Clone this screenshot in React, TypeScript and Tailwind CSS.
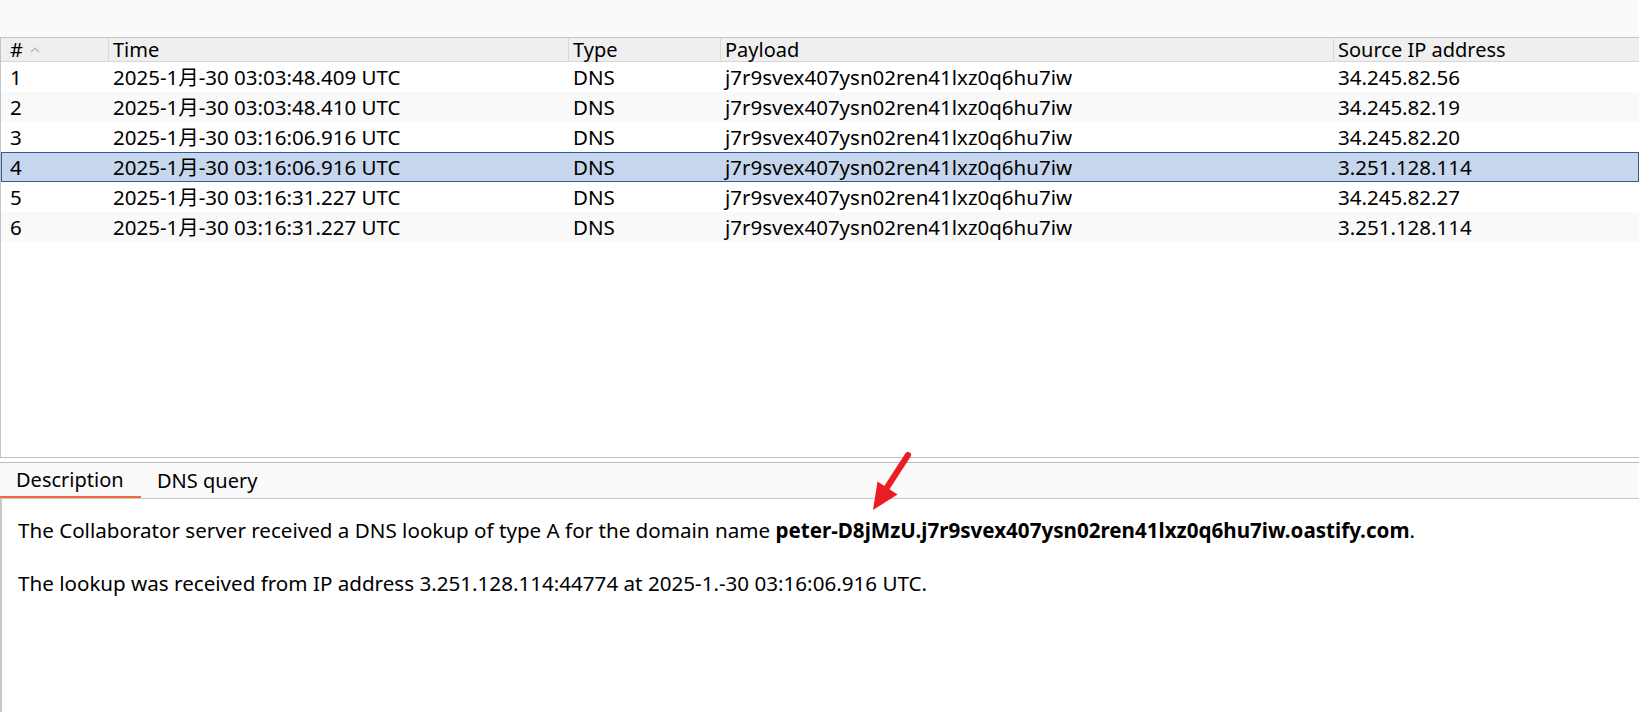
const rows = [
  { id: 1, time: "2025-1月-30 03:03:48.409 UTC", ip: "34.245.82.56" },
  { id: 2, time: "2025-1月-30 03:03:48.410 UTC", ip: "34.245.82.19" },
  { id: 3, time: "2025-1月-30 03:16:06.916 UTC", ip: "34.245.82.20" },
  { id: 4, time: "2025-1月-30 03:16:06.916 UTC", ip: "3.251.128.114" },
  { id: 5, time: "2025-1月-30 03:16:31.227 UTC", ip: "34.245.82.27" },
  { id: 6, time: "2025-1月-30 03:16:31.227 UTC", ip: "3.251.128.114" },
];

const payload = "j7r9svex407ysn02ren41lxz0q6hu7iw";
const cols = "grid grid-cols-[107px_460px_152px_613px_1fr]";

function HeaderRow() {
  return (
    <div className={`${cols} h-[25px] border-y border-t-[#c4c4c4] border-b-[#d6d6d6] bg-[#efefef] text-[20px] leading-[23px]`}>
      <div className="flex items-center gap-[7px] pl-[9px]">
        <span>#</span>
        <svg width="10" height="6" viewBox="0 0 10 6" className="mt-[1px]">
          <polyline points="1,5 5,1 9,5" fill="none" stroke="#b4b4b4" strokeWidth="1.2" />
        </svg>
      </div>
      <div className="border-l border-[#d9d9d9] pl-[4px]">Time</div>
      <div className="border-l border-[#d9d9d9] pl-[4px]">Type</div>
      <div className="border-l border-[#d9d9d9] pl-[4px]">Payload</div>
      <div className="border-l border-[#d9d9d9] pl-[4px]">Source IP address</div>
    </div>
  );
}

function DataRow({ r }: { r: (typeof rows)[number] }) {
  const selected = r.id === 4;
  const bg = selected
    ? "bg-[#c6d6ec] border border-[#2f5e93]"
    : r.id % 2 === 0
      ? "bg-[#f9f9f9] border border-transparent"
      : "bg-white border border-transparent";
  return (
    <div className={`${cols} h-[30px] items-center text-[20.5px] leading-[28px] ${bg}`}>
      <div className="pl-[8px]">{r.id}</div>
      <div className="pl-[4px]">{r.time}</div>
      <div className="pl-[4px]">DNS</div>
      <div className="pl-[4px]">{payload}</div>
      <div className="pl-[4px]">{r.ip}</div>
    </div>
  );
}

export default function App() {
  return (
    <div className="relative flex h-[712px] w-[1639px] flex-col overflow-hidden bg-white font-['Noto_Sans','Noto_Sans_CJK_SC',sans-serif] text-black">
      <div className="h-[37px] shrink-0 bg-[#fafafa]" />

      <div className="flex h-[420px] shrink-0 flex-col border-l border-[#c4c4c4]">
        <HeaderRow />
        {rows.map((r) => (
          <DataRow key={r.id} r={r} />
        ))}
      </div>

      <div className="h-[6px] shrink-0 border-y border-[#bdbdbd] bg-white" />

      <div className="flex h-[36px] shrink-0 items-stretch border-b border-[#c8c8c8] bg-[#fafafa] text-[20px]">
        <div className="flex w-[141px] items-center border-b-2 border-[#f4683a] pl-[16px] pt-[1px]">
          Description
        </div>
        <div className="flex items-center pl-[16px] pt-[1px]">DNS query</div>
      </div>

      <div className="flex-1 border-l-2 border-[#c8c8c8] pl-[16px] pt-[18px] text-[20.6px] leading-[26.5px]">
        <p>
          The Collaborator server received a DNS lookup of type A for the domain name{" "}
          <span className="font-bold">peter-D8jMzU.j7r9svex407ysn02ren41lxz0q6hu7iw.oastify.com</span>.
        </p>
        <p className="mt-[26.5px]">
          The lookup was received from IP address 3.251.128.114:44774 at 2025-1.-30 03:16:06.916 UTC.
        </p>
      </div>

      <svg className="absolute left-0 top-0" width="1639" height="712" viewBox="0 0 1639 712">
        <line x1="908" y1="455" x2="886" y2="489" stroke="#ec1c24" strokeWidth="6" strokeLinecap="round" />
        <polygon points="873,510 877.5,481.5 897.5,494.5" fill="#ec1c24" />
      </svg>
    </div>
  );
}
